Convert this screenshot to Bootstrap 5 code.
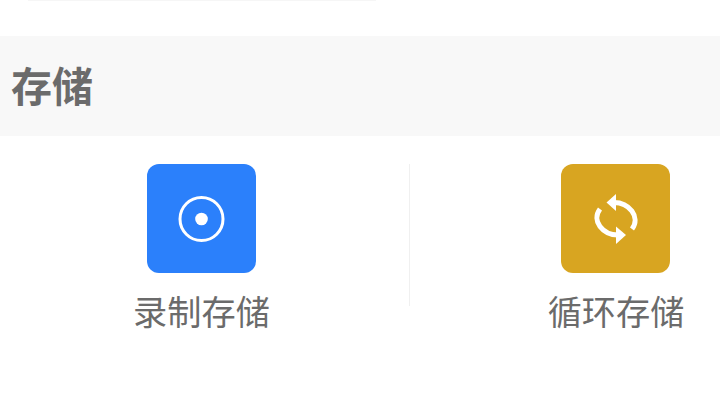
<!DOCTYPE html>
<html lang="zh">
<head>
<meta charset="utf-8">
<title>存储</title>
<link href="https://cdn.jsdelivr.net/npm/bootstrap@5.3.0/dist/css/bootstrap.min.css" rel="stylesheet">
<style>
html, body { width: 720px; height: 404px; overflow: hidden; background: #fff; }
body { font-family: "Liberation Sans", "Noto Sans CJK SC", sans-serif; color: #6b6b6b; }
.top-rule { width: 348px; height: 1px; margin-left: 28px; background: #f6f6f6; }
.section-band { height: 100px; margin-top: 35px; padding-left: 11px; padding-top: 4px; background: #f8f8f8; }
.section-name { font-size: 41px; line-height: 1; color: #6b6b6b; }
.tile-row { padding-top: 28px; }
.tile-cell { height: 142px; }
.tile-cell-a { width: 410px; padding-right: 7px; border-right: 1px solid #f0f0f0; }
.tile-cell-b { width: 310px; padding-left: 138px; }
.tile-stack { width: 135px; }
.tile-icon { width: 109px; height: 109px; border-radius: 12px; }
.tile-blue { background: #2b80fb; }
.tile-gold { background: #d8a521; }
.tile-icon svg { display: block; }
.tile-name { margin-top: 19px; padding-left: 1px; font-size: 34.2px; line-height: 42px; color: #6b6b6b; white-space: nowrap; }
</style>
</head>
<body>
<div class="top-rule"></div>
<div class="section-band d-flex align-items-center">
  <h2 class="section-name fw-bold m-0">存储</h2>
</div>
<div class="tile-row d-flex">
  <div class="tile-cell tile-cell-a d-flex flex-column align-items-center">
    <div class="tile-icon tile-blue">
      <svg width="109" height="109" viewBox="0 0 109 109" fill="none">
        <circle cx="54.500" cy="55" r="21.500" stroke="#fff" stroke-width="3"/>
        <circle cx="54.500" cy="55" r="6.300" fill="#fff"/>
      </svg>
    </div>
    <div class="tile-name">录制存储</div>
  </div>
  <div class="tile-cell tile-cell-b">
    <div class="tile-stack d-flex flex-column align-items-center">
      <div class="tile-icon tile-gold">
        <svg width="109" height="109" viewBox="0 0 109 109" fill="none">
          <path d="M52 38.500C68 38 80 53 71 65" stroke="#fff" stroke-width="5"/>
          <path d="M45.500 38.500L55 30V47Z" fill="#fff"/>
          <path d="M57 71C42 71 30 57 39 45" stroke="#fff" stroke-width="5"/>
          <path d="M65 71L55 62.500V80Z" fill="#fff"/>
        </svg>
      </div>
      <div class="tile-name">循环存储</div>
    </div>
  </div>
</div>
</body>
</html>
